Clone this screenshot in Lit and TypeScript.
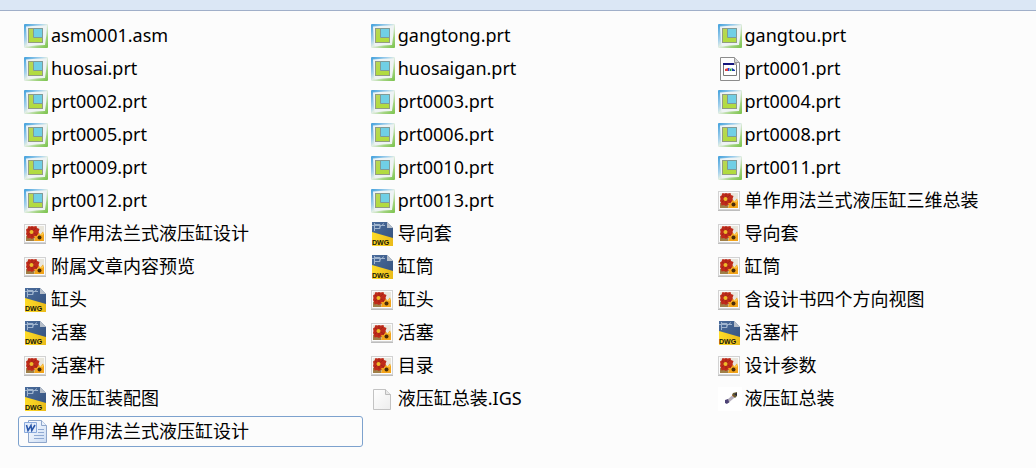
import { LitElement, html, css, svg } from "lit";
import { customElement, property, state } from "lit/decorators.js";
import { classMap } from "lit/directives/class-map.js";

type Kind = "part" | "config" | "photo" | "dwg" | "blank" | "assembly" | "word";

interface FileEntry {
  name: string;
  kind: Kind;
}

const f = (name: string, kind: Kind): FileEntry => ({ name, kind });

const FILES: FileEntry[] = [
  f("asm0001.asm", "part"), f("gangtong.prt", "part"), f("gangtou.prt", "part"),
  f("huosai.prt", "part"), f("huosaigan.prt", "part"), f("prt0001.prt", "config"),
  f("prt0002.prt", "part"), f("prt0003.prt", "part"), f("prt0004.prt", "part"),
  f("prt0005.prt", "part"), f("prt0006.prt", "part"), f("prt0008.prt", "part"),
  f("prt0009.prt", "part"), f("prt0010.prt", "part"), f("prt0011.prt", "part"),
  f("prt0012.prt", "part"), f("prt0013.prt", "part"), f("单作用法兰式液压缸三维总装", "photo"),
  f("单作用法兰式液压缸设计", "photo"), f("导向套", "dwg"), f("导向套", "photo"),
  f("附属文章内容预览", "photo"), f("缸筒", "dwg"), f("缸筒", "photo"),
  f("缸头", "dwg"), f("缸头", "photo"), f("含设计书四个方向视图", "photo"),
  f("活塞", "dwg"), f("活塞", "photo"), f("活塞杆", "dwg"),
  f("活塞杆", "photo"), f("目录", "photo"), f("设计参数", "photo"),
  f("液压缸装配图", "dwg"), f("液压缸总装.IGS", "blank"), f("液压缸总装", "assembly"),
  f("单作用法兰式液压缸设计", "word"),
];

const ART: Record<Kind, unknown> = {
  part: svg`
    <defs>
      <linearGradient id="edge" x1="0" y1="0" x2="1" y2="1">
        <stop offset="0" stop-color="#3f9fdc"/><stop offset=".35" stop-color="#a3d0ec"/>
        <stop offset=".5" stop-color="#e2eee4"/><stop offset=".75" stop-color="#a2d480"/>
        <stop offset="1" stop-color="#79c24a"/>
      </linearGradient>
      <linearGradient id="lime" x1="0" y1="0" x2="0" y2="1">
        <stop offset="0" stop-color="#b9d657"/><stop offset="1" stop-color="#b0dc3c"/>
      </linearGradient>
    </defs>
    <rect width="24" height="24" rx="1" fill="url(#edge)"/>
    <path d="M2 2.500Q12 1.500 23 1.500Q22.500 12 21 21Q12 21 3.500 22.500Q2.500 12 2 2.500Z" fill="#eef3f4"/>
    <rect x="4.500" y="4.500" width="14" height="14" fill="url(#lime)" stroke="#929c84"/>
    <path d="M9.500 4.500h9v9h-9z" fill="#70cfe5" stroke="#7f9a98"/>`,
  config: svg`
    <path d="M2.500 .5h14l5 5v18h-19z" fill="#fdfdfd" stroke="#8c8c8c"/>
    <path d="M16.500 .5v5h5" fill="#d5d5d5" stroke="#999"/>
    <path d="M5.500 6.500h13v12h-13z" fill="#fff" stroke="#777"/>
    <path d="M5 6h11v2H5z" fill="#15157d"/><path d="M16 6h3v2h-3z" fill="#aaa"/>
    <path d="M7 12l3-1v3H7z" fill="#e04040"/>
    <path d="M10 11h1.500v3H10z" fill="#2445d8"/>
    <path d="M12 12l1.500-1v3H12z" fill="#18a040"/>
    <path d="M14 11l3 2v1h-3z" fill="#1b3ca8"/>`,
  photo: svg`
    <path d="M0 2h22v20H0z" fill="#bdbdbd"/>
    <path d="M0 2h22v19H0z" fill="#d2d2d2"/>
    <path d="M1 3h20v17H1z" fill="#fbfbfb"/>
    <path d="M2 4h18v15H2z" fill="#e9e6dc"/>
    <path d="M2 14h9l-1 5H2z" fill="#a08048"/>
    <path d="M8 4l1.500.5 3-.5.5 2 2.500 1-1 3 1 2-2.500 1.500-.5 2.500-2.500-.5L8 17l-2-1-2.500.5-.5-2.500-1-2 .5-2-.5-2.500 1.500-1L4.500 4l2 .5z" fill="#bf2a1a"/>
    <path d="M8 5v10M4 7l9 6M4 13l8-7" stroke="#8a2015" stroke-width=".6"/>
    <circle cx="7.500" cy="10" r="2" fill="#eebb2a"/>
    <path d="M14.500 11l2 1.500 2.500-3 1 3v6.500h-10l1-3-1-2 3 0z" fill="#f2a41a"/>
    <path d="M15 11l1 2 3.500-2.500-1 3z" fill="#ffd152"/>
    <circle cx="15.500" cy="15.500" r="2" fill="#4a2c0a"/>`,
  dwg: svg`
    <defs>
      <linearGradient id="navy" x1="0" y1="0" x2="1" y2="1">
        <stop offset="0" stop-color="#4a6c9c"/><stop offset="1" stop-color="#34507c"/>
      </linearGradient>
      <linearGradient id="gold" x1="0" y1="0" x2="1" y2="0">
        <stop offset="0" stop-color="#ffdc28"/><stop offset="1" stop-color="#eabb1a"/>
      </linearGradient>
    </defs>
    <path d="M1 0h15l6 6v18H1z" fill="url(#navy)"/>
    <path d="M16 0l6 6h-6z" fill="#b7bfca"/>
    <path d="M1 10l21 6v8H1z" fill="url(#gold)"/>
    <path d="M3.500 1v8M1 3.500h13M4 2.500h5v4H3M8 5.500l5-4" fill="none" stroke="#9fb4ce" stroke-width="1"/>
    <text class="tag" x="1" y="23">DWG</text>`,
  blank: svg`
    <defs>
      <linearGradient id="paper" x1="0" y1="0" x2="1" y2="1">
        <stop offset="0" stop-color="#fff"/><stop offset="1" stop-color="#ededed"/>
      </linearGradient>
    </defs>
    <path d="M2.500 2.500h12l5 5v15h-17z" fill="url(#paper)" stroke="#c3c3c3"/>
    <path d="M14.500 2.500v5h5" fill="#e8e8e8" stroke="#bcbcbc"/>`,
  assembly: svg`
    <path d="M0 0h24v24H0z" fill="#fff"/>
    <path d="M9 15l7-6" stroke="#b4aebb" stroke-width="3"/>
    <path d="M9 13l2 3" stroke="#77727f" stroke-width="1"/>
    <path d="M7 13l3-1 1 3-2 2-2-1z" fill="#4d4376"/>
    <path d="M15 6l4-1v4l-2 2-3-3z" fill="#665d36"/>
    <path d="M16 7l3-1v3z" fill="#25233c"/>
    <path d="M14 8l2 2" stroke="#b76c36"/>`,
  word: svg`
    <defs>
      <linearGradient id="sheet" x1="0" y1="0" x2="1" y2="1">
        <stop offset="0" stop-color="#fff"/><stop offset="1" stop-color="#cbdcf4"/>
      </linearGradient>
    </defs>
    <path d="M4.500 .5h13l5 5v17h-18z" fill="url(#sheet)" stroke="#8ea6cb"/>
    <path d="M17.500 .5v5h5" fill="#e8f0fb" stroke="#8ea6cb"/>
    <path d="M14 9.500h6M14 12.500h6M10 15.500h10M10 18.500h10" stroke="#8fa9d2"/>
    <path d="M.5 2.500h12v10H.5z" fill="#e1ebfa" stroke="#8aaadd"/>
    <path d="M2.500 5l1.500 5.500L7 5.500l.8 5L11 5" fill="none" stroke="#2855a8" stroke-width="1.500"/>`,
};

@customElement("file-icon")
class FileIcon extends LitElement {
  @property() kind: Kind = "part";

  static styles = css`
    :host { display: block; flex: none; width: 24px; height: 24px; }
    .art { display: block; width: 24px; height: 24px; }
    .tag { font: bold 7px "Liberation Sans", sans-serif; fill: #16160c; }
  `;

  render() {
    return html`<svg class="art" viewBox="0 0 24 24" aria-hidden="true">${ART[this.kind]}</svg>`;
  }
}

@customElement("app-root")
class AppRoot extends LitElement {
  @state() private selected = FILES.length - 1;

  static styles = css`
    :host {
      display: block;
      min-height: 100vh;
      background: #fcfcfc;
      color: #000;
      font-family: "Noto Sans", "Noto Sans CJK SC", sans-serif;
      font-size: 18px;
    }
    .toolbar {
      box-sizing: border-box;
      height: 11px;
      background: #dbe7f5;
      border-bottom: 1px solid #a0afc9;
    }
    .files {
      display: grid;
      grid-template-columns: 17fr 17fr 16fr;
      gap: 2px;
      margin: 0;
      padding: 9px 0 0 18px;
      list-style: none;
    }
    .cell { min-width: 0; }
    .file {
      display: flex;
      align-items: center;
      gap: 3px;
      box-sizing: border-box;
      width: 100%;
      height: 31px;
      padding: 0 5px;
      border: 1px solid transparent;
      border-radius: 3px;
      background: none;
      color: inherit;
      font: inherit;
      line-height: 26px;
      text-align: left;
      white-space: nowrap;
      outline: none;
    }
    .name { padding-bottom: 2px; }
    .file.selected, .file:focus-visible { border-color: #7da2ce; }
  `;

  render() {
    return html`
      <div class="toolbar"></div>
      <ul class="files">
        ${FILES.map((file, i) => html`
          <li class="cell">
            <button
              type="button"
              class=${classMap({ file: true, selected: i === this.selected })}
              aria-pressed=${i === this.selected ? "true" : "false"}
              @click=${() => (this.selected = i)}
            >
              <file-icon .kind=${file.kind}></file-icon>
              <span class="name">${file.name}</span>
            </button>
          </li>`)}
      </ul>
    `;
  }
}
